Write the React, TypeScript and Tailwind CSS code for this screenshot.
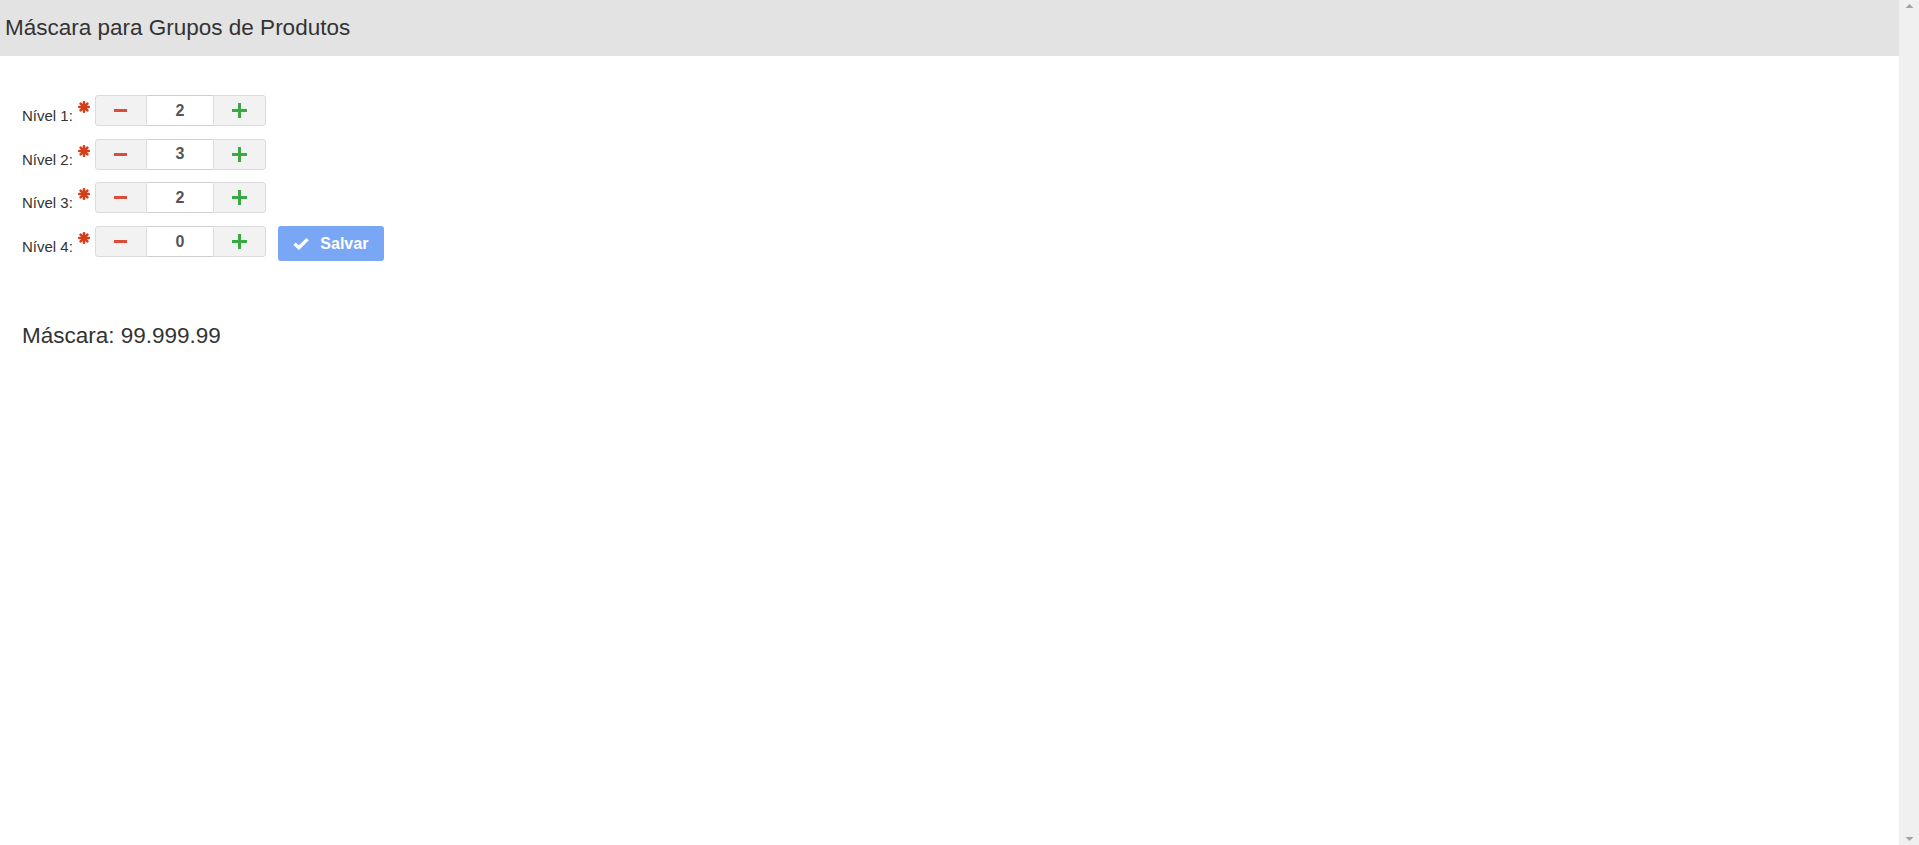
import { useState } from "react"

const FONT = { fontFamily: '"Liberation Sans", Arial, sans-serif' }

function Asterisk() {
  return (
    <svg viewBox="0 0 12 12" className="mt-[6px] h-[12px] w-[12px] shrink-0">
      <g stroke="#d43f1a" strokeWidth="2.6" strokeLinecap="round">
        <line x1="6" y1="1.2" x2="6" y2="10.8" />
        <line x1="1.2" y1="6" x2="10.8" y2="6" />
        <line x1="2.6" y1="2.6" x2="9.4" y2="9.4" />
        <line x1="9.4" y1="2.6" x2="2.6" y2="9.4" />
      </g>
    </svg>
  )
}

function Stepper({ value, onChange }: { value: number; onChange: (v: number) => void }) {
  return (
    <div className="flex h-[31px]">
      <button
        type="button"
        onClick={() => onChange(Math.max(0, value - 1))}
        className="flex w-[52px] items-center justify-center rounded-l-[3px] border border-[#dcdcdc] bg-[#f2f2f2]"
      >
        <span className="block h-[3px] w-[13px] bg-[#dd4b39]" />
      </button>
      <input
        value={value}
        readOnly
        className="w-[66px] border-y border-[#cfcfcf] bg-white text-center text-[16px] font-bold text-[#555] outline-none"
      />
      <button
        type="button"
        onClick={() => onChange(value + 1)}
        className="relative flex w-[53px] items-center justify-center rounded-r-[3px] border border-[#dcdcdc] bg-[#f2f2f2]"
      >
        <span className="absolute h-[3px] w-[15px] bg-[#3aa845]" />
        <span className="absolute h-[15px] w-[3px] bg-[#3aa845]" />
      </button>
    </div>
  )
}

export default function App() {
  const [levels, setLevels] = useState([2, 3, 2, 0])

  const mask = levels
    .filter((n) => n > 0)
    .map((n) => "9".repeat(n))
    .join(".")

  return (
    <div className="flex h-[845px] overflow-hidden bg-white text-[#333]" style={FONT}>
      <div className="flex-1">
        <div className="flex h-[56px] items-center bg-[#e3e3e3] px-[5px] text-[22.5px] text-[#333]">
          Máscara para Grupos de Produtos
        </div>

        <div className="pl-[22px] pt-[39px]">
          <div className="flex flex-col gap-[12.7px]">
            {levels.map((lv, i) => (
              <div key={i} className="flex h-[31px] items-start">
                <span className="mt-[12px] text-[15px] leading-[17px] text-[#333]">Nível {i + 1}:</span>
                <span className="ml-[5px] mr-[5px]">
                  <Asterisk />
                </span>
                <Stepper
                  value={lv}
                  onChange={(v) => setLevels((prev) => prev.map((x, j) => (j === i ? v : x)))}
                />
                {i === 3 && (
                  <button
                    type="button"
                    className="ml-[12px] flex h-[35px] w-[106px] shrink-0 items-center justify-center gap-[11px] rounded-[3px] bg-[#79a7f6] text-[16px] font-bold text-white"
                  >
                    <svg viewBox="0 0 16 12" className="h-[13px] w-[16px]">
                      <path d="M1.6 6.2 L5.9 10.2 L14.6 1.6" fill="none" stroke="white" strokeWidth="3.4" />
                    </svg>
                    Salvar
                  </button>
                )}
              </div>
            ))}
          </div>

          <div className="mt-[66px] text-[22.5px] leading-[26px] text-[#333]">Máscara: {mask}</div>
        </div>
      </div>

      <div className="flex w-[20px] flex-col items-center justify-between bg-[#f0f0f0] py-[4px]">
        <svg viewBox="0 0 10 5" className="h-[4px] w-[9px]">
          <path d="M0 5 L5 0 L10 5 Z" fill="#a3a3a3" />
        </svg>
        <svg viewBox="0 0 10 5" className="h-[4px] w-[9px]">
          <path d="M0 0 L5 5 L10 0 Z" fill="#a3a3a3" />
        </svg>
      </div>
    </div>
  )
}
